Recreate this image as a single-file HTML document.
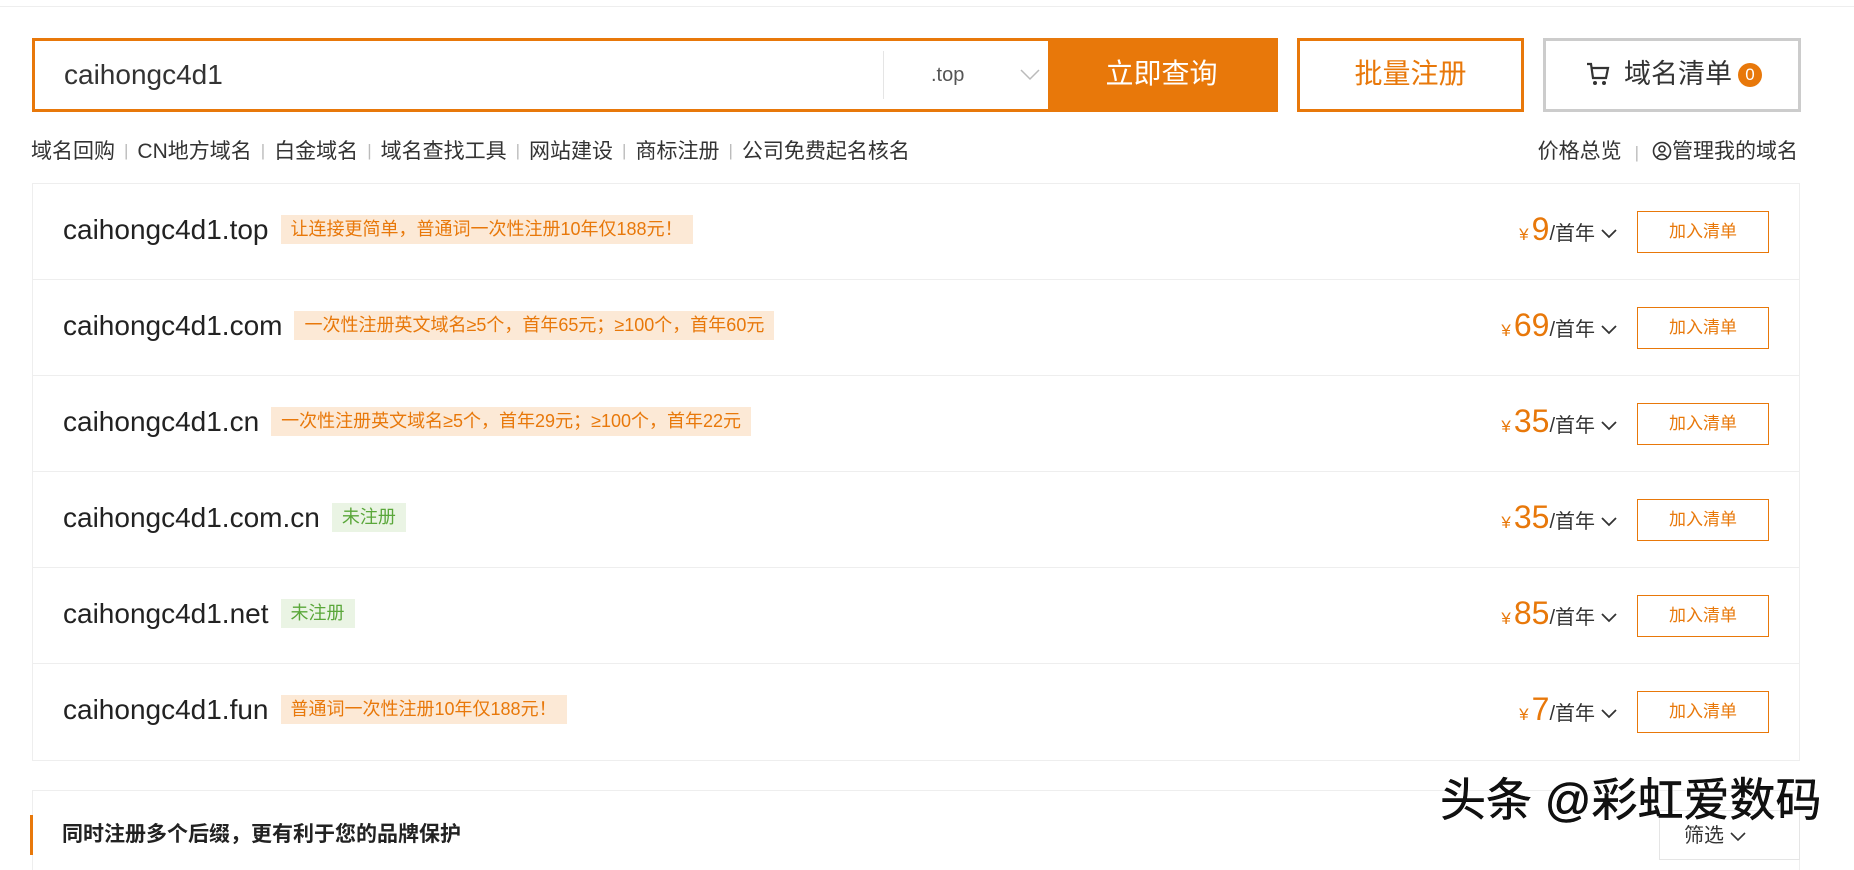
<!DOCTYPE html>
<html><head><meta charset="utf-8"><style>
*{margin:0;padding:0;box-sizing:border-box}
body{width:1854px;height:844px;overflow:hidden;background:#fff;font-family:"Liberation Sans","Noto Sans CJK SC",sans-serif;color:#333;position:relative}
.abs{position:absolute}
.topline{left:0;top:6px;width:1854px;height:1px;background:#eee}
.search{left:32px;top:38px;width:1246px;height:74px;border:3px solid #e8780a}
.search .q{left:29px;top:18px;font-size:28px;color:#333}
.search .sep{left:848px;top:10px;width:1px;height:48px;background:#e5e5e5}
.search .tld{left:896px;top:23px;font-size:20px;color:#555}
.search .btn{right:0;top:0;width:227px;height:68px;background:#e8780a;color:#fff;font-size:28px;text-align:center;line-height:66px}
.b2{left:1297px;top:38px;width:227px;height:74px;border:3px solid #e8780a;color:#e8780a;font-size:28px;text-align:center;line-height:66px}
.b3{left:1543px;top:38px;width:258px;height:74px;border:3px solid #ccc;font-size:27px;line-height:66px;color:#333}
.badge{display:inline-block;width:24px;height:24px;border-radius:12px;background:#e8780a;color:#fff;font-size:17px;line-height:24px;text-align:center;vertical-align:3px;margin-left:6px}
.links{left:31px;top:135px;font-size:21px;color:#333}
.links i{font-style:normal;color:#bbb;margin:0 9px;font-size:17px;vertical-align:2px}
.rlinks{right:56px;top:135px;font-size:21px}
.list{left:32px;top:183px;width:1768px;height:578px;border:1px solid #eee}
.row{position:absolute;left:0;width:100%;height:96px;border-bottom:1px solid #eee}
.row:last-child{border-bottom:none}
.dom{position:absolute;left:30px;top:30px;font-size:28px;color:#222;white-space:nowrap}
.tag{display:inline-block;background:#fce9d6;color:#e8780a;font-size:18px;padding:0 10px;height:29px;line-height:29px;vertical-align:4px;margin-left:12px}
.tag.g{background:#eaf4e4;color:#5aa73a}
.price{position:absolute;right:182px;top:27px;color:#333;font-size:20px;white-space:nowrap}
.price .y{color:#e8780a;font-size:17px}
.price .n{color:#e8780a;font-size:32px;margin-left:3px}
.price svg{margin-left:6px;vertical-align:1px}
.add{position:absolute;right:30px;top:27px;width:132px;height:42px;border:1px solid #e8780a;color:#e8780a;font-size:17px;text-align:center;line-height:40px}
.bot{left:32px;top:790px;width:1768px;height:80px;border:1px solid #eee;border-bottom:none}
.bar{left:30px;top:815px;width:3px;height:40px;background:#e8780a}
.bt{left:62px;top:818px;font-size:21px;font-weight:bold;color:#222}
.filter{left:1659px;top:810px;width:141px;height:50px;border:1px solid #e5e5e5;font-size:20px;padding:8px 0 0 24px}
.wm{left:1440px;top:764px;font-size:46px;color:#111;-webkit-text-stroke:0.5px #000;text-shadow:0 0 3px #fff,0 0 3px #fff}
</style></head><body>
<div class="abs topline"></div>
<div class="abs search">
 <div class="abs q">caihongc4d1</div>
 <div class="abs sep"></div>
 <div class="abs tld">.top</div>
 <svg class="abs" style="left:985px;top:27px" width="20" height="14" viewBox="0 0 20 14"><path d="M1 2 L10 11 L19 2" stroke="#bbb" stroke-width="1.5" fill="none"/></svg>
 <div class="abs btn">立即查询</div>
</div>
<div class="abs b2">批量注册</div>
<div class="abs b3"><svg style="margin-left:40px;vertical-align:-4px;margin-right:14px" width="24" height="26" viewBox="0 0 24 26"><path d="M1 3 H5 L7 17 H20 L22 7 H6" stroke="#333" stroke-width="2.2" fill="none"/><circle cx="9" cy="22" r="2" fill="#333"/><circle cx="18" cy="22" r="2" fill="#333"/></svg>域名清单<span class="badge">0</span></div>
<div class="abs links">域名回购<i>|</i>CN地方域名<i>|</i>白金域名<i>|</i>域名查找工具<i>|</i>网站建设<i>|</i>商标注册<i>|</i>公司免费起名核名</div>
<div class="abs rlinks">价格总览<i style="font-style:normal;color:#bbb;margin:0 13px;font-size:17px">|</i><svg width="20" height="20" viewBox="0 0 20 20" style="vertical-align:-3px"><circle cx="10" cy="10" r="8.5" stroke="#333" stroke-width="1.6" fill="none"/><circle cx="10" cy="8" r="3" stroke="#333" stroke-width="1.6" fill="none"/><path d="M5 16 Q10 11 15 16" stroke="#333" stroke-width="1.6" fill="none"/></svg>管理我的域名</div>
<div class="abs list">
 <div class="row" style="top:0"><div class="dom">caihongc4d1.top<span class="tag">让连接更简单，普通词一次性注册10年仅188元！</span></div><div class="price"><span class="y">¥</span><span class="n">9</span>/首年<svg width="16" height="10" viewBox="0 0 16 10"><path d="M1 1 L8 8 L15 1" stroke="#333" stroke-width="1.8" fill="none"/></svg></div><div class="add">加入清单</div></div>
 <div class="row" style="top:96px"><div class="dom">caihongc4d1.com<span class="tag">一次性注册英文域名≥5个，首年65元；≥100个，首年60元</span></div><div class="price"><span class="y">¥</span><span class="n">69</span>/首年<svg width="16" height="10" viewBox="0 0 16 10"><path d="M1 1 L8 8 L15 1" stroke="#333" stroke-width="1.8" fill="none"/></svg></div><div class="add">加入清单</div></div>
 <div class="row" style="top:192px"><div class="dom">caihongc4d1.cn<span class="tag">一次性注册英文域名≥5个，首年29元；≥100个，首年22元</span></div><div class="price"><span class="y">¥</span><span class="n">35</span>/首年<svg width="16" height="10" viewBox="0 0 16 10"><path d="M1 1 L8 8 L15 1" stroke="#333" stroke-width="1.8" fill="none"/></svg></div><div class="add">加入清单</div></div>
 <div class="row" style="top:288px"><div class="dom">caihongc4d1.com.cn<span class="tag g">未注册</span></div><div class="price"><span class="y">¥</span><span class="n">35</span>/首年<svg width="16" height="10" viewBox="0 0 16 10"><path d="M1 1 L8 8 L15 1" stroke="#333" stroke-width="1.8" fill="none"/></svg></div><div class="add">加入清单</div></div>
 <div class="row" style="top:384px"><div class="dom">caihongc4d1.net<span class="tag g">未注册</span></div><div class="price"><span class="y">¥</span><span class="n">85</span>/首年<svg width="16" height="10" viewBox="0 0 16 10"><path d="M1 1 L8 8 L15 1" stroke="#333" stroke-width="1.8" fill="none"/></svg></div><div class="add">加入清单</div></div>
 <div class="row" style="top:480px"><div class="dom">caihongc4d1.fun<span class="tag">普通词一次性注册10年仅188元！</span></div><div class="price"><span class="y">¥</span><span class="n">7</span>/首年<svg width="16" height="10" viewBox="0 0 16 10"><path d="M1 1 L8 8 L15 1" stroke="#333" stroke-width="1.8" fill="none"/></svg></div><div class="add">加入清单</div></div>
</div>
<div class="abs bot"></div>
<div class="abs bar"></div>
<div class="abs bt">同时注册多个后缀，更有利于您的品牌保护</div>
<div class="abs filter">筛选 <svg width="16" height="10" viewBox="0 0 16 10"><path d="M1 1 L8 8 L15 1" stroke="#333" stroke-width="1.6" fill="none"/></svg></div>
<div class="abs wm">头条 @彩虹爱数码</div>
</body></html>
